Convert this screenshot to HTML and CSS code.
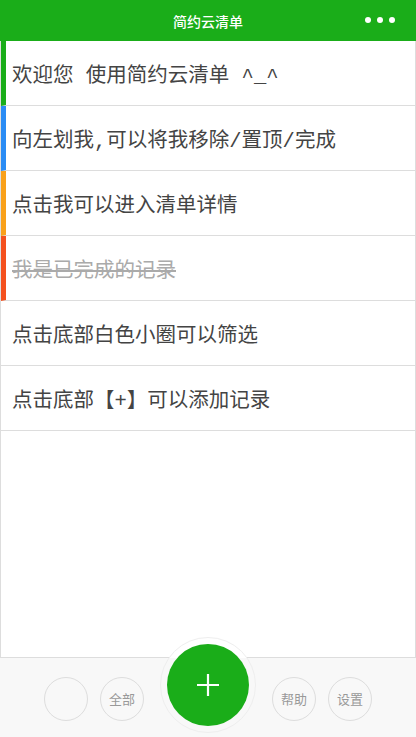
FILE: index.html
```html
<!DOCTYPE html>
<html>
<head>
  <meta charset="utf-8">
  <title>简约云清单</title>
  <link rel="stylesheet" href="styles.css">
</head>
<body>
  <div class="app">
    <div class="header">
      <span class="title">简约云清单</span>
      <span class="more"><i></i><i></i><i></i></span>
    </div>

    <ul class="list">
      <li class="item green">欢迎您 使用简约云清单 ^_^</li>
      <li class="item blue">向左划我,可以将我移除/置顶/完成</li>
      <li class="item orange">点击我可以进入清单详情</li>
      <li class="item red done">我是已完成的记录</li>
      <li class="item plain">点击底部白色小圈可以筛选</li>
      <li class="item plain">点击底部【+】可以添加记录</li>
    </ul>

    <div class="footer">
      <a class="circle"></a>
      <a class="circle">全部</a>
      <div class="add-ring">
        <a class="add-button">
          <svg width="24" height="24" viewBox="0 0 24 24">
            <path d="M12 1v22M1 12h22" stroke="#fff" stroke-width="2.2" fill="none"/>
          </svg>
        </a>
      </div>
      <a class="circle">帮助</a>
      <a class="circle">设置</a>
    </div>
  </div>
</body>
</html>
```

FILE: styles.css
```css
/* 简约云清单 - 首页 */
body {
  margin: 0;
  padding: 0;
  font-family: "Noto Sans CJK SC", "Noto Sans", sans-serif;
  background-color: #fff;
}

.app {
  height: 737px;
  display: flex;
  flex-direction: column;
  overflow: hidden;
}

.header {
  height: 41px;
  flex-shrink: 0;
  background-color: #1aad19;
  display: flex;
  align-items: center;
  justify-content: center;
  position: relative;
}

.header .title {
  color: #fff;
  font-size: 14px;
  font-weight: 500;
}

.header .more {
  position: absolute;
  right: 21px;
  top: 17px;
  display: flex;
  gap: 6px;
}

.header .more i {
  width: 6px;
  height: 6px;
  border-radius: 50%;
  background-color: #fff;
}

.list {
  flex: 1;
  margin: 0;
  padding: 0;
  list-style: none;
  border-left: 1px solid #ddd;
  border-right: 1px solid #ddd;
}

.item {
  height: 64px;
  display: flex;
  align-items: center;
  padding-left: 6px;
  border-left: 5px solid #fff;
  border-bottom: 1px solid #ddd;
  font-family: "Liberation Mono", "Noto Sans CJK SC", monospace;
  font-size: 20.5px;
  color: #444;
  white-space: pre;
}

.item.plain {
  border-left: none;
  padding-left: 11px;
}

.item.green {
  border-left-color: #1aad19;
}

.item.blue {
  border-left-color: #2a8cf4;
}

.item.orange {
  border-left-color: #f9a11b;
}

.item.red {
  border-left-color: #f4511e;
}

.item.done {
  color: #aaa;
  text-decoration: line-through;
}

.footer {
  height: 79px;
  flex-shrink: 0;
  border-top: 1px solid #ddd;
  background-color: #f8f8f8;
  display: flex;
  align-items: center;
  justify-content: center;
  gap: 12px;
}

.circle {
  width: 42px;
  height: 42px;
  border: 1px solid #ddd;
  border-radius: 50%;
  display: flex;
  align-items: center;
  justify-content: center;
  font-size: 13px;
  color: #999;
  margin-top: 2px;
}

.add-ring {
  width: 94px;
  height: 94px;
  margin: -21px 4px 0;
  align-self: flex-start;
  border: 1px solid #eee;
  border-radius: 50%;
  background: linear-gradient(#fff 0, #fff 20px, #f8f8f8 20px);
  display: flex;
  align-items: center;
  justify-content: center;
}

.add-button {
  width: 82px;
  height: 82px;
  border-radius: 50%;
  background-color: #1aad19;
  display: flex;
  align-items: center;
  justify-content: center;
  cursor: pointer;
}
```
